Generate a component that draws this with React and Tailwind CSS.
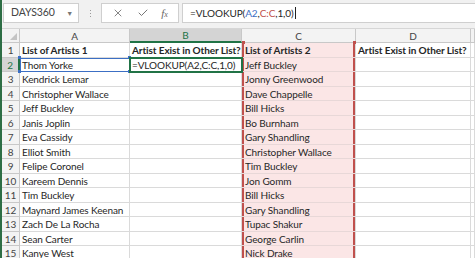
import React from "react";
import { X, Check } from "lucide-react";

const listA = [
  "List of Artists 1",
  "Thom Yorke",
  "Kendrick Lemar",
  "Christopher Wallace",
  "Jeff Buckley",
  "Janis Joplin",
  "Eva Cassidy",
  "Elliot Smith",
  "Felipe Coronel",
  "Kareem Dennis",
  "Tim Buckley",
  "Maynard James Keenan",
  "Zach De La Rocha",
  "Sean Carter",
  "Kanye West",
];

const listC = [
  "List of Artists 2",
  "Jeff Buckley",
  "Jonny Greenwood",
  "Dave Chappelle",
  "Bill Hicks",
  "Bo Burnham",
  "Gary Shandling",
  "Christopher Wallace",
  "Tim Buckley",
  "Jon Gomm",
  "Bill Hicks",
  "Gary Shandling",
  "Tupac Shakur",
  "George Carlin",
  "Nick Drake",
];

const cell = "relative border-r border-b border-[#dadada] pl-[2px] whitespace-nowrap leading-[14px]";
const head = "border-r border-b border-[#c8c8c8] bg-[#f3f3f3] text-center text-[#444] leading-[14px]";

// formula with coloured references
const Formula = () => (
  <>
    =VLOOKUP(<span className="text-[#3c6fc4]">A2</span>,<span className="text-[#c0504d]">C:C</span>,1,0)
  </>
);

export default function App() {
  return (
    <div
      className="w-[475px] h-[258px] overflow-hidden bg-white border-l-2 border-[#2e6e45] text-[#262626] text-[10px] tracking-[-0.1px]"
      style={{ fontFamily: "Lato, 'Liberation Sans', sans-serif" }}
    >
      {/* formula bar */}
      <div className="h-[29px] bg-[#f1f1f1] flex items-start pt-[3px] border-b border-[#d6d6d6]">
        <div className="ml-[1px] w-[76px] h-[20px] bg-white border border-[#cfcfcf] flex items-center pl-[7px] pr-[5px] text-[#444] text-[10.5px]">
          <span className="flex-1">DAYS360</span>
          <span className="text-[7px] text-[#777]">▼</span>
        </div>
        <div className="w-[22px] h-[20px] flex flex-col items-center justify-center gap-[2px]">
          <span className="w-[1px] h-[1px] bg-[#999]" />
          <span className="w-[1px] h-[1px] bg-[#999]" />
          <span className="w-[1px] h-[1px] bg-[#999]" />
        </div>
        <div className="w-[78px] h-[20px] bg-white border border-[#cfcfcf] flex items-center justify-around px-[4px] text-[#666]">
          <X size={12} strokeWidth={1.6} />
          <Check size={12} strokeWidth={1.8} />
          <span className="italic text-[11px]" style={{ fontFamily: "'Liberation Serif', serif" }}>
            f<span className="text-[8px]">x</span>
          </span>
        </div>
        <div className="ml-[3px] flex-1 h-[20px] bg-white border border-[#cfcfcf] border-r-0 flex items-center pl-[7px] text-[10px]">
          <Formula />
          <span className="w-[1px] h-[12px] bg-[#222] ml-[1px]" />
        </div>
      </div>

      {/* sheet */}
      <div className="grid grid-cols-[18px_110px_112px_114px_115px_1fr] grid-rows-[14px_repeat(15,14.5px)]">
        <div className={head + " relative"}>
          <span
            className="absolute right-[2px] bottom-[2px] w-0 h-0"
            style={{ borderRight: "7px solid #c4c4c4", borderTop: "7px solid transparent" }}
          />
        </div>
        <div className={head}>A</div>
        <div className="border-r border-b-2 border-[#c8c8c8] border-b-[#217346] bg-[#d4d4d4] text-center text-[#217346] leading-[13px]">B</div>
        <div className={head}>C</div>
        <div className={head}>D</div>
        <div className={head}></div>

        {listA.map((a, i) => {
          const r = i + 1;
          const active = r === 2;
          const bold = r === 1 ? " font-bold" : "";
          return (
            <React.Fragment key={r}>
              <div
                className={
                  active
                    ? "border-r-2 border-b border-[#c8c8c8] border-r-[#217346] bg-[#d4d4d4] text-center text-[#217346] leading-[14px]"
                    : head
                }
              >
                {r}
              </div>
              <div className={cell + bold + (active ? " outline outline-[#3c6fc4] -outline-offset-1 z-10" : "")}>
                {a}
                {active && (
                  <>
                    <span className="absolute -left-[2px] -top-[2px] w-[3px] h-[3px] bg-[#3c6fc4]" />
                    <span className="absolute -right-[2px] -top-[2px] w-[3px] h-[3px] bg-[#3c6fc4]" />
                    <span className="absolute -left-[2px] -bottom-[2px] w-[3px] h-[3px] bg-[#3c6fc4]" />
                    <span className="absolute -right-[2px] -bottom-[2px] w-[3px] h-[3px] bg-[#3c6fc4]" />
                  </>
                )}
              </div>
              <div className={cell + bold + (active ? " outline-2 outline-[#217346] -outline-offset-1 z-10" : "")}>
                {r === 1 ? "Artist Exist in Other List?" : active ? "=VLOOKUP(A2,C:C,1,0)" : ""}
              </div>
              <div className={cell + bold + " bg-[#fbe6e6] border-b-[#e8d8d8] shadow-[inset_2px_0_0_#c0504d,inset_-2px_0_0_#c0504d] pl-[3px]"}>
                {listC[i]}
                {r === 1 && (
                  <>
                    <span className="absolute left-0 -top-[2px] w-[3px] h-[3px] bg-[#c0504d]" />
                    <span className="absolute right-[-1px] -top-[2px] w-[3px] h-[3px] bg-[#c0504d]" />
                  </>
                )}
              </div>
              <div className={cell + bold}>{r === 1 ? "Artist Exist in Other List?" : ""}</div>
              <div className={cell}></div>
            </React.Fragment>
          );
        })}
      </div>
    </div>
  );
}
